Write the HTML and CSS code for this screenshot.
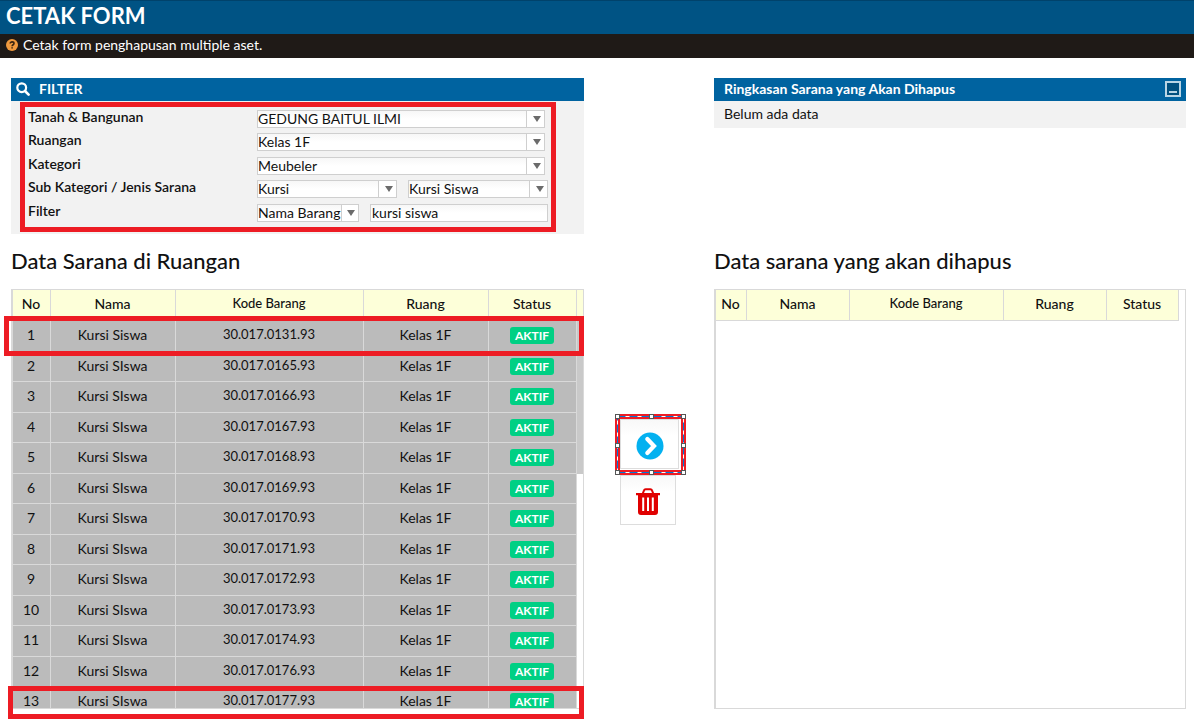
FILE: index.html
```html
<!DOCTYPE html>
<html lang="id">
<head>
<meta charset="utf-8">
<title>Cetak Form</title>
<link rel="stylesheet" href="styles.css">
</head>
<body>
<header class="page-head">
  <h1 class="page-title">CETAK FORM</h1>
  <p class="page-note">
    <svg class="note-icon" viewBox="0 0 12 12" aria-hidden="true"><circle cx="6" cy="6" r="6" fill="#f19a3e"/><path d="M4.2 4.6C4.2 2.3 8 2.4 8 4.5 8 5.8 6.1 5.7 6.1 7.2M6.1 8.2V9.6" fill="none" stroke="#3a2410" stroke-width="1.6"/></svg>
    Cetak form penghapusan multiple aset.
  </p>
</header>
<main class="layout">
  <section class="panel filter-panel">
    <h2 class="panel-head">
      <svg class="search-icon" viewBox="0 0 14 14" aria-hidden="true"><circle cx="5.7" cy="5.7" r="4.4" fill="none" stroke="#fff" stroke-width="2.2"/><path d="M9 9l3.6 3.6" stroke="#fff" stroke-width="2.6" stroke-linecap="round"/></svg>
      FILTER
    </h2>
    <form class="filter-form">
      <div class="field"><label for="gedung">Tanah &amp; Bangunan</label><span class="select wide"><select id="gedung"><option>GEDUNG BAITUL ILMI</option></select></span></div>
      <div class="field"><label for="ruangan">Ruangan</label><span class="select wide"><select id="ruangan"><option>Kelas 1F</option></select></span></div>
      <div class="field"><label for="kategori">Kategori</label><span class="select wide"><select id="kategori"><option>Meubeler</option></select></span></div>
      <div class="field"><label for="sub">Sub Kategori / Jenis Sarana</label><span class="select half"><select id="sub"><option>Kursi</option></select></span><span class="select half"><select aria-label="Jenis Sarana"><option>Kursi Siswa</option></select></span></div>
      <div class="field"><label for="kolom">Filter</label><span class="select small"><select id="kolom"><option>Nama Barang</option></select></span><input class="keyword" type="text" aria-label="Kata kunci" value="kursi siswa"></div>
    </form>
    <span class="mark mark-filter"></span>
  </section>

  <section class="panel summary-panel">
    <h2 class="panel-head summary-head">Ringkasan Sarana yang Akan Dihapus
      <button class="collapse" type="button" aria-label="Ciutkan"></button>
    </h2>
    <p class="summary-text">Belum ada data</p>
  </section>

  <section class="source">
    <h2 class="list-title">Data Sarana di Ruangan</h2>
    <div class="list-wrap">
      <div class="list-box">
        <table class="list">
          <colgroup><col class="c-no"><col class="c-nama"><col class="c-kode"><col class="c-ruang"><col class="c-status"></colgroup>
          <thead><tr><th>No</th><th>Nama</th><th class="code">Kode Barang</th><th>Ruang</th><th>Status</th></tr></thead>
          <tbody>
            <tr><td>1</td><td>Kursi Siswa</td><td class="code">30.017.0131.93</td><td>Kelas 1F</td><td><span class="badge">AKTIF</span></td></tr>
            <tr><td>2</td><td>Kursi SIswa</td><td class="code">30.017.0165.93</td><td>Kelas 1F</td><td><span class="badge">AKTIF</span></td></tr>
            <tr><td>3</td><td>Kursi SIswa</td><td class="code">30.017.0166.93</td><td>Kelas 1F</td><td><span class="badge">AKTIF</span></td></tr>
            <tr><td>4</td><td>Kursi SIswa</td><td class="code">30.017.0167.93</td><td>Kelas 1F</td><td><span class="badge">AKTIF</span></td></tr>
            <tr><td>5</td><td>Kursi SIswa</td><td class="code">30.017.0168.93</td><td>Kelas 1F</td><td><span class="badge">AKTIF</span></td></tr>
            <tr><td>6</td><td>Kursi SIswa</td><td class="code">30.017.0169.93</td><td>Kelas 1F</td><td><span class="badge">AKTIF</span></td></tr>
            <tr><td>7</td><td>Kursi SIswa</td><td class="code">30.017.0170.93</td><td>Kelas 1F</td><td><span class="badge">AKTIF</span></td></tr>
            <tr><td>8</td><td>Kursi SIswa</td><td class="code">30.017.0171.93</td><td>Kelas 1F</td><td><span class="badge">AKTIF</span></td></tr>
            <tr><td>9</td><td>Kursi SIswa</td><td class="code">30.017.0172.93</td><td>Kelas 1F</td><td><span class="badge">AKTIF</span></td></tr>
            <tr><td>10</td><td>Kursi SIswa</td><td class="code">30.017.0173.93</td><td>Kelas 1F</td><td><span class="badge">AKTIF</span></td></tr>
            <tr><td>11</td><td>Kursi SIswa</td><td class="code">30.017.0174.93</td><td>Kelas 1F</td><td><span class="badge">AKTIF</span></td></tr>
            <tr><td>12</td><td>Kursi SIswa</td><td class="code">30.017.0176.93</td><td>Kelas 1F</td><td><span class="badge">AKTIF</span></td></tr>
            <tr><td>13</td><td>Kursi SIswa</td><td class="code">30.017.0177.93</td><td>Kelas 1F</td><td><span class="badge">AKTIF</span></td></tr>
          </tbody>
        </table>
        <div class="track"><div class="track-head"></div><div class="thumb"></div></div>
      </div>
      <span class="mark mark-first"></span>
      <span class="mark mark-last"></span>
    </div>
  </section>

  <div class="actions">
    <button class="action move" type="button" aria-label="Pindahkan">
      <svg class="move-icon" viewBox="0 0 28 28" aria-hidden="true"><circle cx="14" cy="14" r="13.5" fill="#03b1f0"/><path d="M11.3 7l6.7 7-6.7 7" fill="none" stroke="#fff" stroke-width="4.2" stroke-linecap="round" stroke-linejoin="miter"/></svg>
    </button>
    <button class="action" type="button" aria-label="Hapus">
      <svg class="trash-icon" viewBox="0 0 24 28" aria-hidden="true"><path d="M6.8 5.5L8 2.4Q8.4 1.2 9.6 1.2h4.8q1.2 0 1.6 1.2l1.2 3.1" fill="none" stroke="#e00000" stroke-width="2"/><path d="M0 5h24v2.2H22V24q0 3-3 3H5q-3 0-3-3V7.2H0z" fill="#e00000"/><path d="M7.2 9.5v13.500M12 9.5v13.500M16.8 9.5v13.500" stroke="#fff" stroke-width="2"/></svg>
    </button>
    <svg class="selection" viewBox="0 0 71 61" aria-hidden="true">
      <rect x="2.5" y="2.5" width="66" height="56" fill="none" stroke="#ed1c24" stroke-width="5"/>
      <rect x="2.5" y="2.5" width="66" height="56" fill="none" stroke="#fff" stroke-width="1"/>
      <rect x="2.5" y="2.5" width="66" height="56" fill="none" stroke="#0078d7" stroke-width="1" stroke-dasharray="8 4"/>
      <g fill="#fff" stroke="#555" stroke-width="1"><rect x=".5" y=".5" width="4" height="4"/><rect x="34.5" y=".5" width="4" height="4"/><rect x="66.5" y=".5" width="4" height="4"/><rect x=".5" y="29.5" width="4" height="4"/><rect x="66.5" y="29.5" width="4" height="4"/><rect x=".5" y="56.5" width="4" height="4"/><rect x="34.5" y="56.5" width="4" height="4"/><rect x="66.5" y="56.5" width="4" height="4"/></g>
    </svg>
  </div>

  <section class="target">
    <h2 class="list-title">Data sarana yang akan dihapus</h2>
    <div class="list-box target-box">
      <table class="list">
        <colgroup><col class="t-no"><col class="t-nama"><col class="t-kode"><col class="t-ruang"><col class="t-status"></colgroup>
        <thead><tr><th>No</th><th>Nama</th><th class="code">Kode Barang</th><th>Ruang</th><th>Status</th></tr></thead>
      </table>
    </div>
  </section>
</main>
</body>
</html>
```
FILE: styles.css
```css
* { box-sizing: border-box; }
body { margin: 0; background: #fff; color: #111; font: 14px/18px Lato, "Open Sans", sans-serif; }
h1, h2, p { margin: 0; }
select, input, button { font: inherit; color: inherit; }

.page-title { height: 34px; padding: 0 6px; border-top: 1px solid #00426b; background: #005384; color: #fff; font-size: 22px; line-height: 29px; font-weight: 700; }
.page-note { display: flex; align-items: center; gap: 5px; height: 24px; padding: 0 6px 2px; background: #1f1a17; color: #fff; }
.note-icon { width: 12px; height: 12px; }

.layout { display: grid; grid-template-columns: 573fr 130fr 472fr; padding: 20px 8px 15px 11px; }
.panel { position: relative; background: #f2f2f2; }
.filter-panel { grid-column: 1; height: 156px; }
.summary-panel { grid-column: 3; align-self: start; }
.panel-head { display: flex; align-items: center; gap: 9px; height: 23px; padding: 0 5px 2px; background: #0063a0; color: #fff; font-size: 14px; line-height: 18px; font-weight: 700; }
.search-icon { width: 14px; height: 14px; }
.summary-head { justify-content: space-between; padding: 0 5px 1px 10px; }
.collapse { display: flex; align-items: flex-end; justify-content: center; width: 16px; height: 16px; padding: 0 0 2px; border: 2px solid #b9d5e5; background: #00507f; }
.collapse::after { content: ""; width: 8px; height: 2px; background: #b9d5e5; }
.summary-text { padding: 4px 10px 5px; }

.filter-form { padding: 9px 0 0 17px; }
.field { display: flex; align-items: flex-start; height: 23px; }
.field:nth-child(even) { height: 24px; }
.field label { width: 229px; line-height: 14px; font-weight: 600; }
.select { position: relative; height: 18px; margin-right: 11px; }
.select select { display: block; width: 100%; height: 18px; padding: 0 18px 0 0; border: 1px solid #cfcfcf; border-radius: 0; appearance: none; background: linear-gradient(#f7f7f7, #fff 8px); line-height: 16px; }
.select::after { content: ""; position: absolute; top: 1px; right: 1px; width: 17px; height: 16px; border-left: 1px solid #cfcfcf; background: #fff; }
.select::before { content: ""; position: absolute; z-index: 1; top: 6px; right: 4px; border: 4px solid transparent; border-top: 6px solid #6b6b6b; border-bottom: 0; }
.wide { width: 288px; }
.half { width: 140px; }
.small { width: 102px; }
.small select { padding-right: 0; }
.small::after { width: 16px; }
.keyword { width: 178px; height: 18px; padding: 0 1px 2px; border: 1px solid #cfcfcf; background: linear-gradient(#f7f7f7, #fff 8px); line-height: 14px; }

.source { grid-column: 1; }
.target { grid-column: 3; }
.list-title { padding: 14px 0; height: 55px; font-size: 22px; line-height: 26px; font-weight: 500; }
.list-wrap { position: relative; }
.list-box { display: flex; align-items: stretch; height: 420px; overflow: hidden; border: 1px solid #d9d9d9; border-left-width: 2px; }
.list { flex: 1; align-self: flex-start; border-collapse: separate; border-spacing: 0; table-layout: fixed; text-align: center; }
.c-no { width: 38px; } .c-nama { width: 125px; } .c-kode { width: 188px; } .c-ruang { width: 125px; } .c-status { width: 88px; }
.t-no { width: 31px; } .t-nama { width: 103px; } .t-kode { width: 154px; } .t-ruang { width: 103px; } .t-status { width: 72px; }
.list th, .list td { height: 30px; padding: 0 1px 2px 0; border-right: 1px solid #d9d9d9; border-bottom: 1px solid #d9d9d9; line-height: 18px; }
.list th { height: 31px; background: #fdffd9; font-weight: 500; }
.list td { background: #bbb; }
.list tr:nth-child(odd) td { height: 31px; }
.list .code { padding-bottom: 4px; font-size: 13px; }
.badge { display: block; width: 44px; margin: 1px auto 0; border-radius: 3px; background: #00d084; color: #fff; font-size: 12px; line-height: 17px; font-weight: 700; }
.track { width: 6px; }
.track-head { height: 30px; background: #fdffd9; }
.thumb { height: 154px; background: #c9c9c9; }
.target-box { padding-right: 6px; }

.actions { position: relative; grid-column: 2; display: flex; flex-direction: column; align-items: flex-start; padding: 185px 0 0 36px; }
.action { display: flex; align-items: center; justify-content: center; width: 56px; height: 50px; padding: 4px 0 0; border: 1px solid #ddd; background: linear-gradient(#f8f8f8, #fff 16px); }
.move { width: 59px; margin-bottom: 6px; }
.move-icon { width: 28px; height: 28px; }
.trash-icon { width: 24px; height: 28px; }

.mark { position: absolute; border: 5px solid #ed1c24; pointer-events: none; }
.mark-filter { top: 24px; left: 9px; width: 536px; height: 130px; }
.mark-first { top: 27px; left: -7px; right: 0; height: 40px; }
.mark-last { top: 397px; left: -3px; right: 0; height: 33px; }
.selection { position: absolute; top: 180px; left: 31px; width: 71px; height: 61px; pointer-events: none; }
```
